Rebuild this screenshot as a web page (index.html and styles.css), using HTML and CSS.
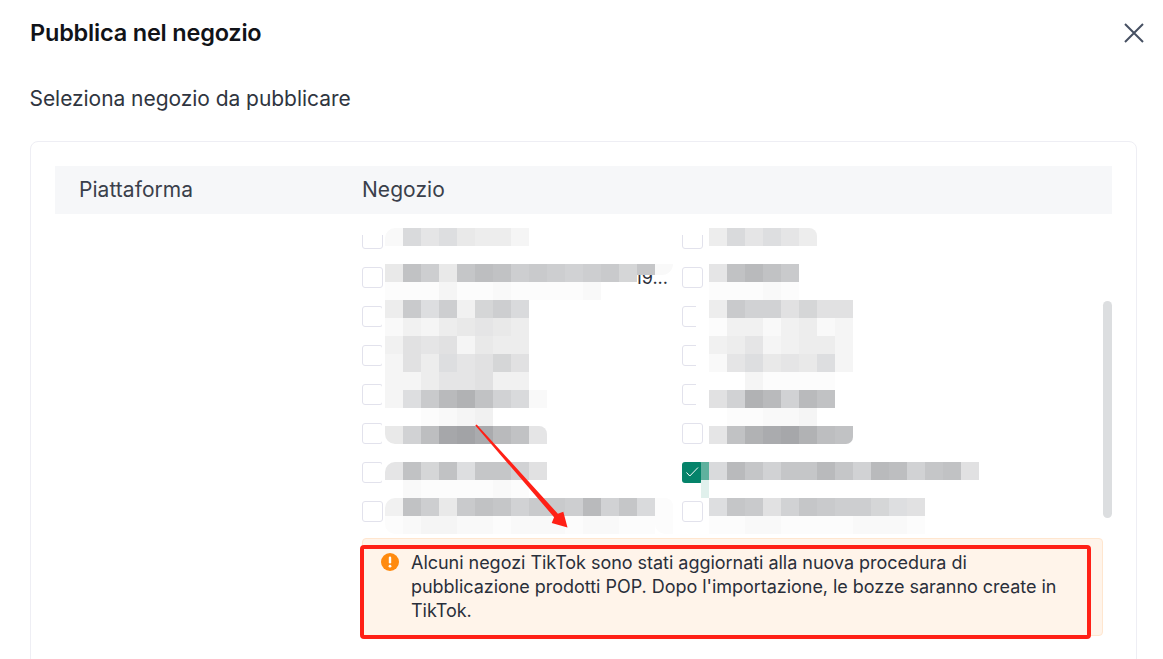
FILE: index.html
```html
<!DOCTYPE html>
<html lang="it">
<head>
<meta charset="utf-8">
<title>Pubblica nel negozio</title>
<link rel="stylesheet" href="styles.css">
</head>
<body>
<div class="dialog">
  <header class="head">
    <h1 class="title">Pubblica nel negozio</h1>
    <svg class="close" width="20" height="20" viewBox="0 0 20 20" aria-label="Chiudi"><path d="M1 1 19 19M19 1 1 19"/></svg>
  </header>
  <p class="sub">Seleziona negozio da pubblicare</p>
  <section class="card">
    <div class="thead"><span class="th-plat">Piattaforma</span><span>Negozio</span></div>
    <div class="panel">
      <div class="list">
        <div class="col">
          <div class="row"><i class="cb"></i></div>
          <div class="row"><i class="cb"></i><span class="label">19...</span></div>
          <div class="row"><i class="cb"></i></div>
          <div class="row"><i class="cb"></i></div>
          <div class="row"><i class="cb"></i></div>
          <div class="row"><i class="cb"></i></div>
          <div class="row"><i class="cb"></i></div>
          <div class="row"><i class="cb"></i></div>
        </div>
        <div class="col">
          <div class="row"><i class="cb"></i></div>
          <div class="row"><i class="cb"></i></div>
          <div class="row"><i class="cb"></i></div>
          <div class="row"><i class="cb"></i></div>
          <div class="row"><i class="cb"></i></div>
          <div class="row"><i class="cb"></i></div>
          <div class="row"><i class="cb on"><svg width="21" height="21" viewBox="0 0 21 21"><path d="M4.5 10.5 7.8 14 16 5.5"/></svg></i></div>
          <div class="row"><i class="cb"></i></div>
        </div>
      </div>
      <div class="smear smear-l"></div>
      <div class="smear smear-r"></div>
      <div class="mosaic mosaic-l">
        <div class="mr"><b class="f8 tl"></b><b class="d8"></b><b class="e4"></b><b class="dc"></b><b class="e8"></b><b class="ec"></b><b class="ec"></b><b class="f4"></b></div>
        <div class="mr"></div>
        <div class="mr"><b class="e8"></b><b class="c0"></b><b class="cc"></b><b class="e8"></b><b class="c4"></b><b class="bc"></b><b class="c0"></b><b class="cc"></b><b class="c8"></b><b class="cc"></b><b class="d0"></b><b class="cc"></b><b class="c8"></b><b class="d4"></b><b class="c4 short"></b><b class="f8 short fade"></b></div>
        <div class="mr"><b class="fc"></b><b class="fc"></b><b class="fc"></b><b class="f4"></b><b class="fc"></b><b class="fc"></b><b class="f8"></b><b class="fc"></b><b class="fc"></b><b class="fc"></b><b class="fc"></b><b class="f8"></b></div>
        <div class="mr"><b class="ec"></b><b class="c8"></b><b class="dc"></b><b class="cc"></b><b class="f0"></b><b class="d4"></b><b class="cc"></b><b class="d8"></b></div>
        <div class="mr"><b class="f8"></b><b class="f0"></b><b class="f4"></b><b class="ec"></b><b class="e8"></b><b class="e4"></b><b class="e8"></b><b class="ec"></b></div>
        <div class="mr"><b class="f0"></b><b class="e0"></b><b class="e4"></b><b class="e0"></b><b class="f4"></b><b class="e8"></b><b class="ec"></b><b class="ec"></b></div>
        <div class="mr"><b class="f4"></b><b class="e0"></b><b class="ec"></b><b class="dc"></b><b class="e4"></b><b class="e0"></b><b class="d4"></b><b class="e0"></b></div>
        <div class="mr"><b class="f4"></b><b class="f4"></b><b class="ec"></b><b class="e4"></b><b class="e4"></b><b class="e0"></b><b class="f0"></b><b class="f0"></b></div>
        <div class="mr"><b class="f4"></b><b class="dc"></b><b class="c8"></b><b class="b8"></b><b class="b0"></b><b class="c0"></b><b class="d0"></b><b class="d8"></b><b class="f8"></b></div>
        <div class="mr"><b class="no"></b><b class="no"></b><b class="fc"></b><b class="f8"></b><b class="f4"></b><b class="f0"></b></div>
        <div class="mr"><b class="e8 bl"></b><b class="d0"></b><b class="bc"></b><b class="a5"></b><b class="a0"></b><b class="a9"></b><b class="b8"></b><b class="c0"></b><b class="e4 tr"></b></div>
        <div class="mr"></div>
        <div class="mr"><b class="e4 tl"></b><b class="c0"></b><b class="d4"></b><b class="c0"></b><b class="dc"></b><b class="c4"></b><b class="c4"></b><b class="d0"></b><b class="e0"></b></div>
        <div class="mr"><b class="no"></b><b class="f8"></b><b class="fc"></b><b class="fc"></b><b class="fc"></b><b class="fc"></b><b class="f8"></b><b class="fc"></b></div>
        <div class="mr"><b class="f0 tl"></b><b class="c0"></b><b class="cc"></b><b class="e8"></b><b class="c8"></b><b class="c0"></b><b class="c4"></b><b class="d0"></b><b class="c8"></b><b class="c8"></b><b class="cc"></b><b class="b8"></b><b class="d0"></b><b class="c4"></b><b class="d8"></b><b class="fc tr"></b></div>
        <div class="mr"><b class="fc bl"></b><b class="f8"></b><b class="f4"></b><b class="f4"></b><b class="f8"></b><b class="f8"></b><b class="fc"></b><b class="f8"></b><b class="f8"></b><b class="f8"></b><b class="fc"></b><b class="f8"></b><b class="f8"></b><b class="fc"></b><b class="fc"></b><b class="fc bl"></b></div>
      </div>
      <div class="mosaic mosaic-r">
        <div class="mr"><b class="ec"></b><b class="d8"></b><b class="e4"></b><b class="dc"></b><b class="e4"></b><b class="ec tr"></b></div>
        <div class="mr"></div>
        <div class="mr"><b class="e4"></b><b class="c0"></b><b class="b8"></b><b class="c0"></b><b class="c8"></b></div>
        <div class="mr"><b class="fc"></b><b class="fc"></b><b class="fc"></b><b class="f8"></b><b class="fc"></b></div>
        <div class="mr"><b class="ec"></b><b class="c8"></b><b class="d0"></b><b class="d0"></b><b class="e0"></b><b class="d4"></b><b class="e0"></b><b class="e0"></b></div>
        <div class="mr"><b class="fc"></b><b class="f0"></b><b class="f0"></b><b class="f8"></b><b class="f0"></b><b class="ec"></b><b class="f8"></b><b class="f4"></b></div>
        <div class="mr"><b class="f0"></b><b class="ec"></b><b class="e4"></b><b class="f4"></b><b class="f0"></b><b class="ec"></b><b class="ec"></b><b class="f4"></b></div>
        <div class="mr"><b class="f8"></b><b class="e4"></b><b class="dc"></b><b class="e8"></b><b class="e4"></b><b class="e8"></b><b class="dc"></b><b class="f4"></b></div>
        <div class="mr"><b class="no"></b><b class="no"></b><b class="f4"></b><b class="fc"></b><b class="fc"></b><b class="fc"></b><b class="fc"></b></div>
        <div class="mr"><b class="e0"></b><b class="d0"></b><b class="b0"></b><b class="b8"></b><b class="d0"></b><b class="b8"></b><b class="c0"></b></div>
        <div class="mr"><b class="no"></b><b class="fc"></b><b class="fc"></b><b class="f8"></b><b class="f8"></b><b class="f4"></b></div>
        <div class="mr"><b class="e4"></b><b class="c0"></b><b class="b0"></b><b class="a9"></b><b class="a5"></b><b class="b0"></b><b class="bc"></b><b class="c0 br"></b></div>
        <div class="mr"></div>
        <div class="mr"><b class="tk"></b><b class="d8"></b><b class="b8"></b><b class="c4"></b><b class="d0"></b><b class="c4"></b><b class="c4"></b><b class="b8"></b><b class="c4"></b><b class="d0"></b><b class="b8"></b><b class="bc"></b><b class="d0"></b><b class="c4"></b><b class="c0"></b><b class="e0"></b></div>
        <div class="mr"><b class="tl2"></b></div>
        <div class="mr"><b class="dc"></b><b class="c4"></b><b class="c8"></b><b class="e0"></b><b class="d0"></b><b class="c4"></b><b class="c8"></b><b class="cc"></b><b class="cc"></b><b class="d4"></b><b class="dc"></b><b class="e0"></b></div>
        <div class="mr"><b class="fc"></b><b class="fc"></b><b class="f8"></b><b class="f8"></b><b class="fc"></b><b class="fc"></b><b class="fc"></b><b class="fc"></b><b class="f8"></b><b class="f8"></b><b class="f8"></b><b class="fc"></b></div>
      </div>
      <div class="thumb"></div>
    </div>
    <div class="notice">
      <svg class="notice-icon" width="18" height="18" viewBox="0 0 18 18"><circle cx="9" cy="9" r="9"/><rect x="7.8" y="3.5" width="2.4" height="7" rx="1.2"/><circle class="dot" cx="9" cy="13.2" r="1.4"/></svg>
      <p class="notice-text">Alcuni negozi TikTok sono stati aggiornati alla nuova procedura di pubblicazione prodotti POP. Dopo l'importazione, le bozze saranno create in TikTok.</p>
    </div>
  </section>
  <div class="redbox"></div>
  <svg class="arrow" width="92" height="103" viewBox="0 0 92 103"><path d="M-.7 .6 .7 -.6 81.9 88.8 87.3 86.7 91.5 102.5 75.7 98 78.1 92.2Z"/></svg>
</div>
</body>
</html>
```
FILE: styles.css
```css
* { box-sizing: border-box; }
html, body { margin: 0; height: 100%; background: #fff; overflow: hidden; }
body { font-family: Inter, "Liberation Sans", sans-serif; color: #2a2f3a; }
.dialog { position: relative; width: 1163px; height: 659px; overflow: hidden; padding: 0 26px 0 30px; }
.head { display: flex; justify-content: space-between; align-items: center; height: 66px; margin-right: -7px; }
.title { margin: 0; font-size: 23.5px; font-weight: 600; line-height: 30px; color: #111318; letter-spacing: -0.2px; }
.close { fill: none; stroke: #465062; stroke-width: 2; }
.sub { margin: 20px 0 0 -0.5px; font-size: 21px; line-height: 26px; letter-spacing: -0.05px; color: #2f3540; }
.card { margin-top: 29px; height: 540px; border: 1px solid #eeeef4; border-radius: 8px; padding: 24px; }
.thead { display: flex; height: 48px; align-items: center; background: #f6f7f9; padding: 0 0 2px 24px; font-size: 21px; letter-spacing: 0.05px; color: #3a404b; }
.th-plat { width: 283px; }
.panel { position: relative; height: 324px; }
.list { display: flex; position: absolute; left: 307px; top: 21px; right: 0; height: 293px; overflow: hidden; }
.col { width: 320px; margin-top: -7px; }
.row { display: flex; align-items: center; height: 21px; margin-bottom: 18px; }
.cb { flex: none; display: block; width: 21px; height: 21px; border: 1.5px solid #e2e2ec; border-radius: 3px; background: #fff; }
.cb.on { background: #05836a; border: 0; }
.cb.on svg { display: block; fill: none; stroke: #fff; stroke-width: 1; }
.label { width: 283px; margin-left: 2px; font-size: 18px; line-height: 21px; white-space: nowrap; text-align: right; color: #2a2f3a; }
.smear { position: absolute; background: #fff; border-radius: 8px; }
.smear-l { left: 327px; top: 85px; width: 6px; height: 190px; }
.smear-r { left: 641px; top: 76px; width: 14px; height: 130px; }
.mosaic { position: absolute; top: 14px; }
.mosaic-l { left: 330px; }
.mosaic-r { left: 654px; }
.mr { display: flex; height: 18px; }
.mr b { display: block; width: 18px; height: 18px; flex: none; }
.mr .short { height: 11px; }
.mr .fade { border-bottom-right-radius: 16px; }
.tl { border-top-left-radius: 10px; }
.tr { border-top-right-radius: 8px; }
.bl { border-bottom-left-radius: 10px; }
.br { border-bottom-right-radius: 7px; }
.no { background: transparent; }
.a0 { background: #a2a3a6; } .a5 { background: #a6a7aa; } .a9 { background: #aaabae; }
.b0 { background: #b1b2b4; } .b8 { background: #b9babc; } .bc { background: #bdbec0; }
.c0 { background: #c1c2c4; } .c4 { background: #c5c6c8; } .c8 { background: #c9cacc; }
.cc { background: #cdced0; } .d0 { background: #d1d2d4; } .d4 { background: #d5d6d7; }
.d8 { background: #d9dadc; } .dc { background: #dddee0; } .e0 { background: #e1e1e2; }
.e4 { background: #e5e5e6; } .e8 { background: #e9e9e9; } .ec { background: #ededed; }
.f0 { background: #f1f1f1; } .f4 { background: #f5f5f5; } .f8 { background: #f9f9f9; }
.fc { background: #fcfcfc; }
.mosaic-r .mr .tk { width: 8px; margin-left: -8px; background: #5fb19e; }
.mosaic-r .mr .tl2 { width: 8px; margin-left: -8px; background: #e0f0ec; }
.thumb { position: absolute; left: 1048px; top: 87px; width: 9px; height: 217px; border-radius: 5px; background: #dcdee0; }
.notice { display: flex; gap: 12px; margin: 0 9px 0 307px; height: 98px; padding: 12px 24px 0 18px; background: #fff4ea; border: 1px solid #ffe6cf; border-radius: 4px; }
.notice-icon { flex: none; margin-top: 2px; }
.notice-icon circle { fill: #ff8a0f; }
.notice-icon rect, .notice-icon .dot { fill: #fff; }
.notice-text { margin: 0; font-size: 18px; line-height: 24px; letter-spacing: -0.03px; color: #2a2f3a; }
.redbox { position: absolute; left: 360px; top: 545px; width: 731px; height: 94px; border: 4px solid #ff2016; border-radius: 4px; }
.arrow { position: absolute; left: 476px; top: 425px; fill: #ff2016; overflow: visible; }
```
